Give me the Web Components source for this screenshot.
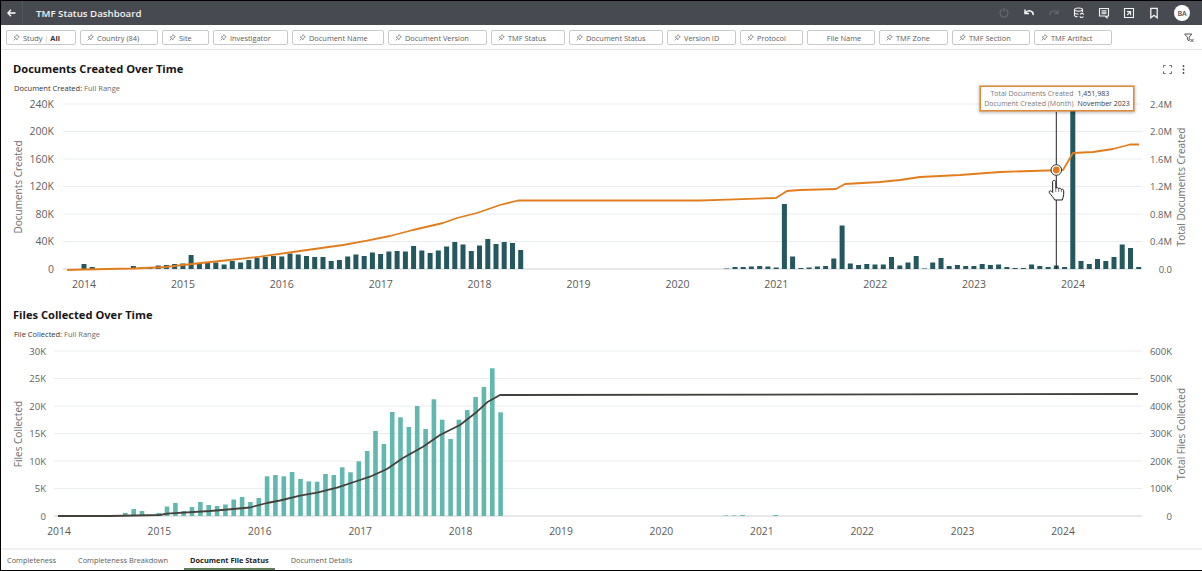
<!DOCTYPE html>
<html lang="en">
<head>
<meta charset="utf-8">
<title>TMF Status Dashboard</title>
<style>
  html, body { margin: 0; padding: 0; background: #fff; }
  body { font-family: "Open Sans", "Liberation Sans", sans-serif; overflow: hidden; }
</style>
</head>
<body>
<tmf-dashboard>
  <tmf-header slot="header" heading="TMF Status Dashboard" initials="BA"></tmf-header>

  <tmf-filter-bar slot="filters">
    <tmf-chip style="width:70px">Study <i>|</i> <b>All</b></tmf-chip>
    <tmf-chip style="width:78px">Country (84)</tmf-chip>
    <tmf-chip style="width:47px">Site</tmf-chip>
    <tmf-chip style="width:75px">Investigator</tmf-chip>
    <tmf-chip style="width:92px">Document Name</tmf-chip>
    <tmf-chip style="width:99px">Document Version</tmf-chip>
    <tmf-chip style="width:74px">TMF Status</tmf-chip>
    <tmf-chip style="width:94px">Document Status</tmf-chip>
    <tmf-chip style="width:69px">Version ID</tmf-chip>
    <tmf-chip style="width:63px">Protocol</tmf-chip>
    <tmf-chip style="width:68px" nopin>File Name</tmf-chip>
    <tmf-chip style="width:69px">TMF Zone</tmf-chip>
    <tmf-chip style="width:78px">TMF Section</tmf-chip>
    <tmf-chip style="width:78px">TMF Artifact</tmf-chip>
  </tmf-filter-bar>

  <time-chart slot="main" kind="documents" actions
    heading="Documents Created Over Time" label="Document Created" range="Full Range">
    <chart-tooltip slot="overlay">
      <span>Total Documents Created</span><b>1,451,983</b>
      <span>Document Created (Month)</span><b>November 2023</b>
    </chart-tooltip>
  </time-chart>

  <time-chart slot="main" kind="files"
    heading="Files Collected Over Time" label="File Collected" range="Full Range"></time-chart>

  <tmf-tabs slot="tabs">
    <span>Completeness</span>
    <span>Completeness Breakdown</span>
    <span active>Document File Status</span>
    <span>Document Details</span>
  </tmf-tabs>
</tmf-dashboard>

<script>
const FONT = '"Open Sans", "Liberation Sans", sans-serif';

class TmfDashboard extends HTMLElement {
  connectedCallback() {
    this.attachShadow({ mode: 'open' });
    this.shadowRoot.innerHTML = `
      <style>
        :host {
          display: flex; flex-direction: column;
          width: 1202px; height: 571px; box-sizing: border-box;
          border-top: 1px solid #000; border-bottom: 1px solid #000; border-left: 1px solid #000;
          background: #fff; overflow: hidden;
        }
        .main { flex: 1; display: flex; flex-direction: column; min-height: 0; }
      </style>
      <slot name="header"></slot>
      <slot name="filters"></slot>
      <div class="main"><slot name="main"></slot></div>
      <slot name="tabs"></slot>
    `;
  }
}

class TmfHeader extends HTMLElement {
  connectedCallback() {
    this.attachShadow({ mode: 'open' });
    const s = 'fill="none" stroke="currentColor" stroke-width="1.1"';
    const icons = [
      ['dim', `<path d="M4 2.6a4 4 0 1 0 4 0M6 1v4" ${s}/>`],
      ['', `<path d="M2 2.5v4h4M2.3 6.3C3.5 4.4 5.8 3.3 8 4.2c1.6.7 2.4 2.2 2.2 4" fill="none" stroke="currentColor" stroke-width="1.5"/>`],
      ['dim', `<path d="M10 2.5v4H6M9.7 6.3C8.5 4.4 6.2 3.3 4 4.2 2.4 4.9 1.6 6.4 1.8 8.2" ${s}/>`],
      ['', `<ellipse cx="5.5" cy="2.6" rx="4" ry="1.6" ${s}/><path d="M1.5 2.6v5.6c0 .9 1.6 1.5 3.2 1.6M9.5 2.6v2.6M1.5 5.4c0 .9 1.8 1.6 4 1.6" ${s}/><path d="M6.8 9.3a2 2 0 0 0 3.6.2M10.8 7.6a2 2 0 0 0-3.6-.2" ${s}/>`],
      ['', `<path d="M1.5 1.5h9v7.5h-1.5v1.8L7.2 9H1.5zM3.5 3.7h5M3.5 5.2h5M3.5 6.7h5" ${s}/>`],
      ['', `<path d="M1.5 1.5h9v9h-9z" ${s}/><path d="M7.6 8.2V4.6H4M7.4 4.8L4.2 8" ${s}/>`],
      ['', `<path d="M2.8 1.3h6.4v9.5L6 8.3l-3.2 2.5z" fill="none" stroke="currentColor" stroke-width="1.3"/>`]
    ].map(([c, d]) => `<svg class="${c}" width="12" height="12" viewBox="0 0 12 12">${d}</svg>`).join('');
    this.shadowRoot.innerHTML = `
      <style>
        :host {
          display: flex; align-items: center; height: 24px; flex: none;
          background: #474a50; color: #f4f4f4; font: 600 9.7px ${FONT};
        }
        .back { width: 21px; height: 100%; display: flex; align-items: center; justify-content: center; border-right: 1px solid #55585e; }
        .title { margin-left: 13px; flex: 1; white-space: nowrap; }
        .icons { display: flex; align-items: center; gap: 13px; margin-right: 12px; }
        .dim { color: #686b70; }
        .avatar {
          width: 16px; height: 16px; border-radius: 50%; background: #fff; color: #474a50;
          margin-left: 1px; font: 600 7px ${FONT};
          display: flex; align-items: center; justify-content: center;
        }
      </style>
      <div class="back">
        <svg width="9" height="8" viewBox="0 0 9 8"><path d="M.5 4h8M4 .8L.8 4 4 7.2" fill="none" stroke="#fff" stroke-width="1.3"/></svg>
      </div>
      <div class="title">${this.getAttribute('heading')}</div>
      <div class="icons">${icons}<div class="avatar">${this.getAttribute('initials')}</div></div>
    `;
  }
}

class TmfFilterBar extends HTMLElement {
  connectedCallback() {
    this.attachShadow({ mode: 'open' });
    this.shadowRoot.innerHTML = `
      <style>
        :host {
          display: flex; align-items: center; flex: none; height: 25px; box-sizing: border-box;
          padding: 1px 0 0 5px; border-bottom: 1px solid #e2e2e2; background: #fff;
        }
        .chips { display: flex; gap: 4px; flex: 1; }
        svg { margin-right: 8px; }
      </style>
      <div class="chips"><slot></slot></div>
      <svg width="10" height="10" viewBox="0 0 10 10">
        <path d="M.6 1h7.2L5.2 4.2v3.6L3.4 6.6V4.2z" fill="none" stroke="#555" stroke-width="1"/>
        <path d="M6.5 6l3 3M9.5 6l-3 3" stroke="#555" stroke-width="1"/>
      </svg>
    `;
  }
}

class TmfChip extends HTMLElement {
  connectedCallback() {
    this.attachShadow({ mode: 'open' });
    const pin = this.hasAttribute('nopin') ? '' : `
      <svg width="7" height="7" viewBox="0 0 7 7">
        <path d="M4 .7L6.3 3 5.3 3.3 4.2 4.6 4 5.8 1.2 3 2.4 2.8 3.7 1.7zM2.4 4.6L.6 6.4" fill="none" stroke="#666" stroke-width=".7"/>
      </svg>`;
    this.shadowRoot.innerHTML = `
      <style>
        :host {
          display: flex; align-items: center; box-sizing: border-box; height: 15px; flex: none;
          gap: 3px; padding-left: 6px; white-space: nowrap;
          justify-content: ${this.hasAttribute('nopin') ? 'center' : 'flex-start'};
          border: 1px solid #c9c9c9; border-radius: 2px; background: #fff;
          color: #5c5c5c; font: 400 7.4px ${FONT};
        }
        ::slotted(b) { color: #333; font-weight: 700; }
        ::slotted(i) { color: #bbb; font-style: normal; }
      </style>
      ${pin}<span><slot></slot></span>
    `;
  }
}

class ChartTooltip extends HTMLElement {
  connectedCallback() {
    this.attachShadow({ mode: 'open' });
    this.shadowRoot.innerHTML = `
      <style>
        :host {
          position: absolute; left: 979px; top: 36px; width: 154px; height: 25px; box-sizing: border-box;
          display: grid; grid-template-columns: auto auto; column-gap: 4px; justify-content: center;
          align-content: center; row-gap: 1px; white-space: nowrap;
          background: #fff; border: 1px solid #e08a35;
          box-shadow: 0 0 0 1px rgba(224,138,53,.5), 0 1px 3px 1px rgba(0,0,0,.25);
          color: #3c3c3c; font: 400 7px/9px ${FONT};
        }
        ::slotted(span) { color: #7a7a7a; text-align: right; }
        ::slotted(b) { font-weight: 400; color: #3c3c3c; }
      </style>
      <slot></slot>
    `;
  }
}

// bar heights in pixels, by month from Jan 2014
function series(pairs) {
  const out = [];
  pairs.forEach(([start, vals]) => vals.forEach((v, i) => out.push([start + i, v])));
  return out;
}

const CHARTS = {
  documents: {
    view: [1, 94, 1201, 204],
    top: 104, bottom: 269, gridLeft: 63, gridRight: 1142, labelRight: 54, leftSize: 10.5, yearSize: 10.5,
    leftTicks: ['0', '40K', '80K', '120K', '160K', '200K', '240K'],
    rightTicks: ['0.0', '0.4M', '0.8M', '1.2M', '1.6M', '2.0M', '2.4M'],
    leftTitle: 'Documents Created', rightTitle: 'Total Documents Created',
    titleY: 187, yearY: 288, yearX: 84, yearStep: 98.9, monthX: 84, monthStep: 8.24,
    barColor: '#24575e', barWidth: 5, lineColor: '#e27d1e', lineWidth: 1.8,
    bars: series([
      [0, [5, 2]],
      [6, [3, 1.5, 2, 3.5, 4, 5, 5.5, 14, 5, 6, 6.5, 4.5, 8, 6.5, 9, 11, 12, 13, 12.5, 15.5, 14.5,
           13, 12, 12, 8, 9, 12.5, 14.5, 13, 16.5, 15, 17.5, 18, 17.5, 23, 18.5, 16, 18.5, 22.5, 27,
           24.5, 18, 23.5, 30, 25, 27, 26, 19]],
      [78, [.5, 2, 2, 2.5, 3, 2.5, 1.5, 65, 12.5, 1, 1.5, 2.5, 3, 10.5, 43.5, 5.5, 4, 5, 4.5, 4.5,
            12, 3.5, 6.5, 13, .5, 6.5, 11, 3, 4, 3, 3, 5, 4, 4.5, 2, 1, 1, 4.5, 3, 2, 3.5, 2,
            164, 8, 5, 10, 8, 12, 24.5, 21, 2]]
    ]),
    line: [[67,270],[84,269.5],[133,268.5],[166,267],[183,265],[220,261],[260,256.7],[300,251],[343,245],
      [367,240.7],[390,236],[413,230],[443,223],[457,218],[477,213],[500,205],[518,200.5],[700,200.5],
      [720,199.8],[776,198],[787,191],[800,190],[836,189],[845,184],[880,182],[900,180],[920,177],
      [960,175],[1000,172],[1063,170],[1073,153],[1093,152],[1113,149],[1130,144.5],[1139,144.5]]
  },
  files: {
    view: [1, 340, 1201, 208],
    top: 351, bottom: 516, gridLeft: 54, gridRight: 1142, labelRight: 46, leftSize: 9.5, yearSize: 10.3,
    leftTicks: ['0', '5K', '10K', '15K', '20K', '25K', '30K'],
    rightTicks: ['0', '100K', '200K', '300K', '400K', '500K', '600K'],
    leftTitle: 'Files Collected', rightTitle: 'Total Files Collected',
    titleY: 434, yearY: 535, yearX: 59, yearStep: 100.4, monthX: 58.6, monthStep: 8.34,
    barColor: '#62b8ae', barWidth: 4.6, lineColor: '#44403c', lineWidth: 1.8,
    bars: series([
      [1, [.7]],
      [8, [3, 7, 5, 0, 3, 9.5, 13, 5, 9, 14, 11, 10, 11.5, 16.5, 19, 14, 18, 39.7, 41,
           39.7, 44, 37, 34.7, 34.3, 42, 41, 48.7, 43.7, 54.7, 65, 85, 72, 104, 98.7, 89, 110,
           87, 116.7, 96.3, 77, 96.3, 106, 119, 129, 147.7, 103.7]],
      [80, [.6, .6, 1, 0, 0, 0, 1]]
    ]),
    line: [[58,516],[110,516],[160,515],[167,513.6],[210,511],[250,507.5],[267,503],[280,500.5],[300,495.7],
      [317,492.7],[337,487.7],[357,481],[370,476.7],[387,469],[403,458],[423,446.7],[440,435],[460,425],
      [477,411.7],[488,401.7],[500,395],[1138,394]]
  }
};

class TimeChart extends HTMLElement {
  connectedCallback() {
    this.attachShadow({ mode: 'open' });
    const c = CHARTS[this.getAttribute('kind')];
    const actions = this.hasAttribute('actions') ? `
      <div class="actions">
        <svg width="9" height="9" viewBox="0 0 9 9"><path d="M.5 2.6V.5h2.1M6.4.5h2.1v2.1M8.5 6.4v2.1H6.4M2.6 8.5H.5V6.4" fill="none" stroke="#555" stroke-width=".9"/></svg>
        <svg width="3" height="9" viewBox="0 0 3 9"><circle cx="1.5" cy="1" r=".9" fill="#444"/><circle cx="1.5" cy="4.5" r=".9" fill="#444"/><circle cx="1.5" cy="8" r=".9" fill="#444"/></svg>
      </div>` : '';
    this.shadowRoot.innerHTML = `
      <style>
        :host {
          display: block; position: relative; flex: none; background: #fff;
          padding-top: ${c.top < 200 ? 11 : 9}px;
        }
        .head { display: flex; align-items: center; height: 16px; padding: 0 17px 0 12px; }
        h2 { flex: 1; margin: 0; font: 700 11.15px/16px ${FONT}; color: #161616; }
        .actions { display: flex; align-items: center; gap: 10px; }
        .sub { margin: 6px 0 0 13px; height: 10px; font: 400 7.5px/10px ${FONT}; color: #333; }
        .sub span { color: #6b6b6b; }
        svg.plot { display: block; margin-top: 1px; }
        text { font-family: ${FONT}; }
      </style>
      <div class="head"><h2>${this.getAttribute('heading')}</h2>${actions}</div>
      <div class="sub">${this.getAttribute('label')}: <span>${this.getAttribute('range')}</span></div>
      ${this.plot(c)}
      <slot name="overlay"></slot>
    `;
  }

  plot(c) {
    const [vx, vy, vw, vh] = c.view;
    const step = (c.bottom - c.top) / 6;
    let out = '';
    // grid and tick labels
    c.leftTicks.forEach((t, i) => {
      const y = c.bottom - i * step;
      out += `<line x1="${c.gridLeft}" x2="${c.gridRight}" y1="${y}" y2="${y}" stroke="${i ? '#e9edf0' : '#d0d0d0'}" stroke-width="1"/>`;
      out += `<text x="${c.labelRight}" y="${y + 3.8}" text-anchor="end" font-size="${c.leftSize}" fill="#5f5f5f">${t}</text>`;
      out += `<text x="1172" y="${y + 3.6}" text-anchor="end" font-size="9.5" fill="#5f5f5f">${c.rightTicks[i]}</text>`;
    });
    // years
    for (let i = 0; i < 11; i++) {
      const x = c.yearX + i * c.yearStep;
      out += `<text x="${x}" y="${c.yearY}" text-anchor="middle" font-size="${c.yearSize}" fill="#5a5a5a">${2014 + i}</text>`;
    }
    // axis titles
    out += `<text transform="translate(22 ${c.titleY}) rotate(-90)" text-anchor="middle" font-size="10" fill="#6e6e6e">${c.leftTitle}</text>`;
    out += `<text transform="translate(1185 ${c.titleY}) rotate(-90)" text-anchor="middle" font-size="10" fill="#6e6e6e">${c.rightTitle}</text>`;
    // bars
    c.bars.forEach(([m, h]) => {
      if (!h) return;
      const x = c.monthX + m * c.monthStep - c.barWidth / 2;
      out += `<rect x="${x.toFixed(1)}" y="${c.bottom - h}" width="${c.barWidth}" height="${h}" fill="${c.barColor}"/>`;
    });
    // cursor line sits under the series line
    if (this.getAttribute('kind') === 'documents') {
      out += `<line x1="1056.3" x2="1056.3" y1="112" y2="269" stroke="#222" stroke-width="1"/>`;
    }
    out += `<polyline points="${c.line.map(p => p.join(',')).join(' ')}" fill="none" stroke="${c.lineColor}" stroke-width="${c.lineWidth}" stroke-linejoin="round"/>`;
    if (this.getAttribute('kind') === 'documents') {
      out += `<circle cx="1056.3" cy="170" r="5.3" fill="#fff" stroke="#333" stroke-width="1"/>`;
      out += `<circle cx="1056.3" cy="170" r="3.4" fill="#e27d1e"/>`;
      // hand pointer
      out += `<path d="M1052.6 182c0-2.2 3.2-2.2 3.2 0v6.4c.5-1.2 2.7-1 2.9.4.6-.9 2.5-.7 2.7.7.7-.6 2.3-.2 2.3 1.2v3.9c0 2.2-1 3.4-1.4 5.4h-7.6c-1.4-2.6-3-4.2-5.3-7.2-.9-1.4 1-2.8 2.3-1.4l1 1.1z" fill="#fff" stroke="#222" stroke-width="1" stroke-linejoin="round"/>`;
      out += `<path d="M1055.8 188.6v3.4M1058.7 189v3M1061.4 189.6v2.6" stroke="#222" stroke-width=".6" fill="none"/>`;
    }
    return `<svg class="plot" width="${vw}" height="${vh}" viewBox="${vx} ${vy} ${vw} ${vh}">${out}</svg>`;
  }
}

class TmfTabs extends HTMLElement {
  connectedCallback() {
    this.attachShadow({ mode: 'open' });
    this.shadowRoot.innerHTML = `
      <style>
        :host {
          display: flex; flex: none; height: 22px; box-sizing: border-box;
          border-top: 2px solid #f1f1f1; background: #fff;
          color: #5c5c5c; font: 400 7.4px ${FONT};
        }
        ::slotted(span) {
          display: flex; align-items: center; padding: 2px 6px 0; margin-right: 10px; white-space: nowrap;
          box-sizing: border-box; border-bottom: 2px solid transparent;
        }
        ::slotted(span[active]) { color: #222; font-weight: 700; border-bottom-color: #5f7d56; }
      </style>
      <slot></slot>
    `;
  }
}

customElements.define('tmf-dashboard', TmfDashboard);
customElements.define('tmf-header', TmfHeader);
customElements.define('tmf-filter-bar', TmfFilterBar);
customElements.define('tmf-chip', TmfChip);
customElements.define('chart-tooltip', ChartTooltip);
customElements.define('time-chart', TimeChart);
customElements.define('tmf-tabs', TmfTabs);
</script>
</body>
</html>
